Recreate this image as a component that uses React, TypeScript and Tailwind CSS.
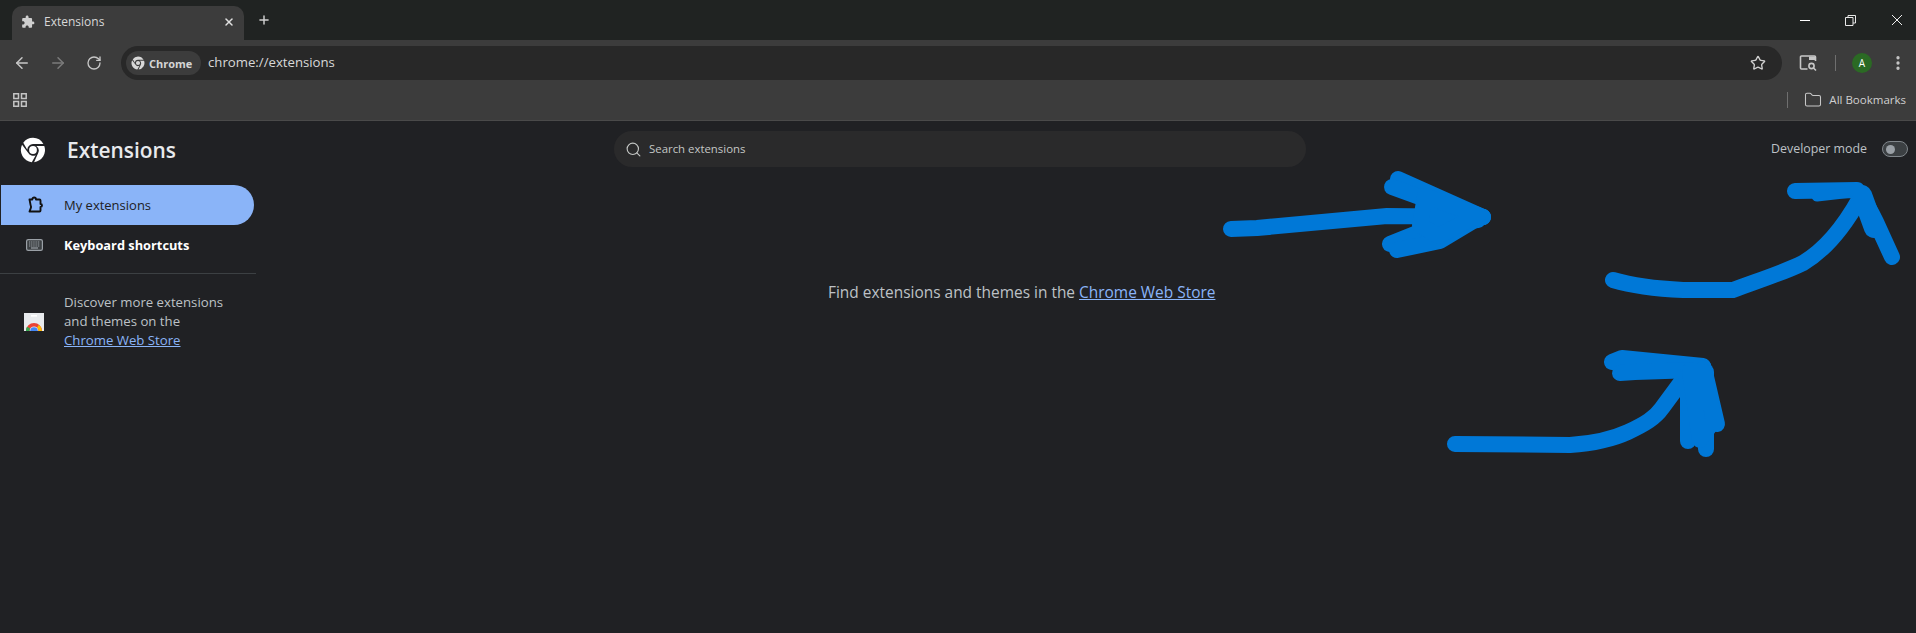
import { ArrowLeft, ArrowRight, RotateCw, Star, X, Plus, EllipsisVertical, Folder, Search } from "lucide-react";

const UI = "font-['Open_Sans','Noto_Sans',sans-serif]";

function ChromeLogo({ size, cls }: { size: number; cls: string }) {
  return (
    <svg width={size} height={size} viewBox="0 0 24 24" className={cls} fill="currentColor">
      <path d="M12 .8a11.2 11.2 0 0 0-9 4.6l3.7 6.3A5.5 5.5 0 0 1 12 6.5h9.6A11.2 11.2 0 0 0 12 .8Z" />
      <path d="M22.4 8.2h-7.3a5.5 5.5 0 0 1 1.7 6.6L13 23.2a11.2 11.2 0 0 0 9.4-15Z" />
      <path d="M1.9 7.2A11.2 11.2 0 0 0 10.9 23.2l3.6-6.3a5.5 5.5 0 0 1-7-2.4L1.9 7.2Z" />
      <circle cx="12" cy="12" r="3.6" />
    </svg>
  );
}

function Arrows() {
  return (
    <svg width="1916" height="633" viewBox="0 0 1916 633" className="absolute left-0 top-0 pointer-events-none" fill="none" stroke="#0078d7" strokeWidth="16" strokeLinecap="round" strokeLinejoin="round">
      <path d="M1231 229 L1257 228 L1387 216 L1483 217" />
      <path d="M1398 179 L1483 217" />
      <path d="M1392 187 L1425 199 L1483 217" />
      <path d="M1390 244 L1440 224 L1478 220" />
      <path d="M1397 250 L1440 241 L1475 220" />
      <path d="M1425 196 L1478 215 L1438 236 L1420 225 Z" fill="#0078d7" />
      <path d="M1613 280 Q1640 288 1683 290 L1733 290 C1760 280 1785 272 1803 263 C1825 250 1845 225 1860 198" strokeWidth="16" />
      <path d="M1795 191 L1857 190 Q1868 205 1876 222 L1892 257" strokeWidth="16" />
      <path d="M1817 196 L1852 192" strokeWidth="11" />
      <path d="M1862 195 L1874 228" strokeWidth="20" />
      <path d="M1455 444 L1570 445 C1600 443 1615 438 1628 432 C1645 424 1655 418 1662 408 L1690 370" strokeWidth="16" />
      <path d="M1612 362 L1622 358 L1703 366" />
      <path d="M1620 373 L1635 372 L1695 370" />
      <path d="M1688 372 L1688 441" />
      <path d="M1706 372 L1706 449" />
      <path d="M1704 368 L1717 424" />
      <path d="M1690 372 L1704 372 L1714 420 L1700 440 Z" fill="#0078d7" />
    </svg>
  );
}

export default function App() {
  return (
    <div className={`relative flex h-[633px] w-[1916px] flex-col overflow-hidden bg-[#202124] ${UI}`}>
      {/* tab strip */}
      <div className="flex h-10 shrink-0 items-end bg-[#202322] pl-3">
        <div className="flex h-[34px] w-[232px] items-center rounded-t-[10px] bg-[#3c3c3c] pb-[2px] pl-[9px] pr-[9px]">
          <svg width="14" height="14" viewBox="0 0 24 24" fill="#cfcfcf">
            <path d="M20.5 11H19V7c0-1.1-.9-2-2-2h-4V3.5C13 2.12 11.88 1 10.5 1S8 2.12 8 3.5V5H4c-1.1 0-1.99.9-1.99 2v3.8H3.5c1.49 0 2.7 1.21 2.7 2.7s-1.21 2.7-2.7 2.7H2V20c0 1.1.9 2 2 2h3.8v-1.5c0-1.49 1.21-2.7 2.7-2.7 1.49 0 2.7 1.21 2.7 2.7V22H17c1.1 0 2-.9 2-2v-4h1.5c1.38 0 2.5-1.12 2.5-2.5S21.88 11 20.5 11z" />
          </svg>
          <span className="ml-[9px] flex-1 text-xs leading-none text-[#d8d8d8]">Extensions</span>
          <X size={12} strokeWidth={3} className="text-[#e0e0e0]" />
        </div>
        <div className="mb-[13px] ml-[13px] flex-1">
          <Plus size={14} strokeWidth={2.5} className="text-[#d0d0d0]" />
        </div>
        <div className="mb-[14px] mr-[13px] flex items-center gap-[35px] text-white">
          <div className="h-px w-[10px] bg-white" />
          <svg width="11" height="11" viewBox="0 0 11 11" fill="none" stroke="#e8e8e8">
            <path d="M.5 2.5h7.5v8H.5zM3 2.5V.5h7.5v7.5H8" />
          </svg>
          <svg width="12" height="12" viewBox="0 0 12 12" stroke="#eee">
            <path d="M1 1l10 10M11 1L1 11" />
          </svg>
        </div>
      </div>

      {/* toolbar */}
      <div className="flex h-[46px] shrink-0 items-end bg-[#3c3c3c] pb-[6px] pl-[13px]">
        <div className="flex h-[34px] items-center">
          <ArrowLeft size={18} strokeWidth={2} className="text-[#c7c7c7]" />
          <ArrowRight size={18} strokeWidth={2} className="ml-[18px] text-[#7b7b7b]" />
          <RotateCw size={16} strokeWidth={2} className="ml-[19px] text-[#c7c7c7]" />
        </div>
        <div className="ml-[19px] flex h-[34px] flex-1 items-center rounded-full bg-[#282828] pl-[5px] pr-[16px]">
          <div className="flex h-6 w-[75px] items-center rounded-full bg-[#3c3c3c] pl-[5px]">
            <ChromeLogo size={14} cls="text-[#d8d8d8]" />
            <span className="ml-[4px] text-[11px] font-bold leading-none text-[#d5d5d5]">Chrome</span>
          </div>
          <span className="ml-[7px] flex-1 text-[13.2px] leading-none text-[#d8d8d8]">chrome://extensions</span>
          <Star size={16} strokeWidth={2} className="text-[#d0d0d0]" />
        </div>
        <div className="flex h-[34px] w-[134px] items-center">
          <svg width="18" height="18" viewBox="0 0 18 18" fill="none" className="ml-[17px] text-[#c7c7c7]" stroke="currentColor" strokeWidth="1.6">
            <path d="M16.5 7V3a1 1 0 0 0-1-1h-13a1 1 0 0 0-1 1v11a1 1 0 0 0 1 1h6" />
            <path d="M10 2.6h6.4V6H10z" fill="currentColor" stroke="none" />
            <circle cx="12.5" cy="12" r="2.6" />
            <path d="M14.5 14l2.5 2.5" />
          </svg>
          <div className="ml-[18px] h-4 w-px bg-[#6f6f6f]" />
          <div className="ml-4 flex h-5 w-5 items-center justify-center rounded-full bg-[#2b6a24] text-[10px] font-medium text-white">A</div>
          <EllipsisVertical size={18} strokeWidth={2.4} className="ml-[17px] text-[#c7c7c7]" />
        </div>
      </div>

      {/* bookmarks bar */}
      <div className="flex h-[35px] shrink-0 items-center border-b border-[#4a4a4a] bg-[#3c3c3c] pb-[6px] pl-[13px] pr-[10px]">
        <svg width="14" height="14" viewBox="0 0 14 14" fill="none" stroke="#c4c4c4" strokeWidth="1.5">
          <path d="M.8.8h4.7v4.7H.8zM8.5.8h4.7v4.7H8.5zM.8 8.5h4.7v4.7H.8zM8.5 8.5h4.7v4.7H8.5z" />
        </svg>
        <div className="flex-1" />
        <div className="h-4 w-px bg-[#6f6f6f]" />
        <Folder size={18} strokeWidth={1.4} className="ml-[16px] text-[#c7c7c7]" />
        <span className="ml-[7px] text-[11.5px] leading-none text-[#d0d0d0]">All Bookmarks</span>
      </div>

      {/* page */}
      <div className="flex min-h-0 flex-1">
        <aside className="w-[256px] shrink-0">
          <div className="flex h-[64px] items-start pl-[20px] pt-[16px]">
            <ChromeLogo size={26} cls="text-white" />
            <span className="ml-[21px] mt-[1px] text-[20.9px] font-semibold leading-6 text-[#e8eaed]">Extensions</span>
          </div>
          <div className="ml-px flex h-10 w-[253px] items-center rounded-r-full bg-[#8ab4f8] pl-[26px]">
            <svg width="17" height="18" viewBox="0 0 17 18" fill="none" stroke="#111" strokeWidth="1.9" strokeLinejoin="round">
              <path d="M2.5 3.5h2.8c0-2.6 3.7-2.6 3.7 0h3.5a1 1 0 0 1 1 1V8c2 0 2 3 0 3v3.5a1 1 0 0 1-1 1H2.5l1.2-3.2c.5-1 .4-2.2-.1-3.2Z" />
            </svg>
            <span className="ml-[20px] text-[13px] font-medium leading-none text-[#202124]">My extensions</span>
          </div>
          <div className="flex h-10 items-center pl-[26px]">
            <svg width="17" height="12" viewBox="0 0 17 12">
              <rect x=".6" y=".6" width="15.8" height="10.8" rx="1.6" fill="#3c4043" stroke="#9aa0a6" strokeWidth="1.2" />
              <path d="M3 3h11M3 5h11M3 7h11" stroke="#9aa0a6" strokeWidth="1.1" strokeDasharray="1.1 .7" />
              <rect x="5" y="8.4" width="7" height="1.2" fill="#9aa0a6" />
            </svg>
            <span className="ml-[21px] text-[12.8px] font-bold leading-none text-white">Keyboard shortcuts</span>
          </div>
          <div className="mt-2 h-px bg-[#3c4043]" />
          <div className="flex items-center pl-[24px] pt-[19px]">
            <svg width="20" height="18" viewBox="0 0 20 18" className="mt-px shrink-0">
              <rect width="20" height="18" fill="#e8eaed" />
              <rect x="7" y="2" width="6" height="1.6" fill="#ffffff" />
              <path d="M2 18a8 8 0 0 1 16 0h-3.5a4.5 4.5 0 0 0-9 0Z" fill="#ea4335" />
              <path d="M14.5 18H18a8 8 0 0 0-3-6.2l-2 2.6a4.5 4.5 0 0 1 1.5 3.6Z" fill="#fbbc04" />
              <path d="M2 18h3.5a4.5 4.5 0 0 1 .6-2.4L3 13.8A8 8 0 0 0 2 18Z" fill="#34a853" />
              <circle cx="10" cy="18" r="3.8" fill="#4285f4" />
            </svg>
            <p className="ml-[20px] text-[13.2px] leading-[19px] text-[#bdc1c6]">
              Discover more extensions<br />and themes on the<br />
              <span className="text-[#8ab4f8] underline">Chrome Web Store</span>
            </p>
          </div>
        </aside>
        <main className="min-w-0 flex-1">
          <div className="flex h-[56px] items-center">
            <div className="ml-[358px] flex h-9 w-[692px] items-center rounded-full bg-[#2a2a2b] pl-[11px]">
              <Search size={17} strokeWidth={1.6} className="text-[#c4c7c5]" />
              <span className="ml-[7px] text-[11.4px] leading-none text-[#c4c7c5]">Search extensions</span>
            </div>
            <div className="flex-1" />
            <span className="text-[12.4px] leading-none text-[#bdc1c6]">Developer mode</span>
            <div className="ml-[15px] mr-2 flex h-4 w-[26px] items-center rounded-full border border-[#80868b] bg-[#3c4043] pl-[3px]">
              <div className="h-[9px] w-[9px] rounded-full bg-[#9aa0a6]" />
            </div>
          </div>
          <p className="ml-[572px] mt-[105px] text-[15.45px] font-medium leading-5 text-[#bdc1c6]">
            Find extensions and themes in the <span className="text-[#8ab4f8] underline">Chrome Web Store</span>
          </p>
        </main>
      </div>
      <Arrows />
    </div>
  );
}
